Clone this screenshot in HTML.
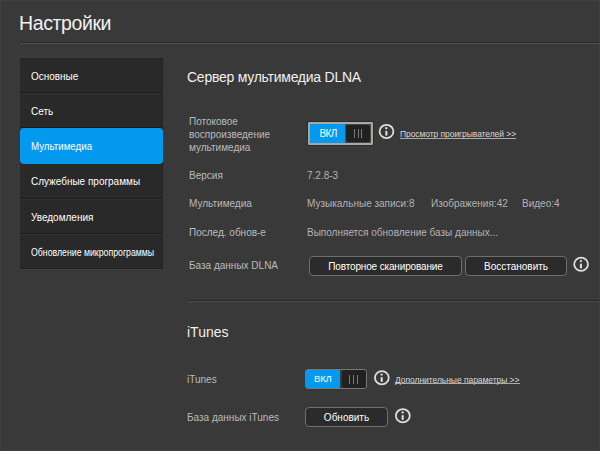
<!DOCTYPE html>
<html><head><meta charset="utf-8">
<style>
html,body{margin:0;padding:0;}
body{width:600px;height:451px;overflow:hidden;background:#393939;position:relative;font-family:"Liberation Sans",sans-serif;}
.a{position:absolute;white-space:nowrap;line-height:1;}
#edgeT{position:absolute;left:0;top:0;width:600px;height:1px;background:#424242;}
#edgeL{position:absolute;left:0;top:0;width:1px;height:451px;background:#404040;}
#edgeB{position:absolute;left:0;bottom:0;width:600px;height:1px;background:#404040;}
#edgeR{position:absolute;right:0;top:0;width:1px;height:451px;background:#404040;}
.title{left:19px;top:13.5px;font-size:19.5px;color:#f2f2f2;letter-spacing:-0.4px;}
.sep1{position:absolute;left:20px;top:42px;width:580px;height:1px;background:#2c2c2c;}
.sep1b{position:absolute;left:20px;top:43px;width:580px;height:1px;background:#4e4e4e;}
.menu{position:absolute;left:20px;top:58px;width:143px;height:211px;background:#292929;border-radius:2px;box-shadow:inset 0 1px 0 #262626, inset 0 -1px 0 #1f1f1f, inset -1px 0 0 #252525, 0 -1px 0 #3f3f3f, 0 1px 0 #3f3f3f;}
.mi{position:absolute;left:0;width:143px;height:35px;}
.mi .l{position:absolute;left:0;bottom:0;width:143px;height:1px;background:#1c1c1c;}
.mi .l::after{content:"";position:absolute;left:0;top:1px;width:143px;height:1px;background:#323232;}
.mt{position:absolute;left:11px;top:13px;font-size:10.5px;color:#fff;letter-spacing:0;transform:scaleX(0.95);transform-origin:0 0;}
.blue{background:#0399ef;border-radius:4px;}
.h{font-size:14px;color:#f0f0f0;letter-spacing:-0.25px;}
.lb{font-size:10px;color:#bbbbbb;}
.vl{font-size:10px;color:#b3b3b3;}
.btn{position:absolute;box-sizing:border-box;height:20px;border:1.5px solid #6f6f6f;border-radius:4px;background:#2b2b2b;}
.btn span{position:absolute;left:0;right:0;top:5px;text-align:center;color:#fff;font-size:10px;line-height:1;white-space:nowrap;}
.info{position:absolute;width:20px;height:20px;}
.lnk{font-size:8.5px;color:#d8d8d8;}
.ul{position:absolute;height:1px;background:#ababab;}
.sep2{position:absolute;left:187px;top:300px;width:413px;height:1px;background:#2a2a2a;}
.sep2b{position:absolute;left:187px;top:301px;width:413px;height:1px;background:#474747;box-shadow:0 1px 0 #3f3f3f;}
.kl{position:absolute;width:1.2px;background:#7a7a7a;}
</style></head><body>
<svg width="0" height="0" style="position:absolute"><defs>
<g id="ic"><ellipse cx="10" cy="10" rx="6.9" ry="6.65" fill="none" stroke="#dedede" stroke-width="1.8"/><circle cx="9.8" cy="6.8" r="1.15" fill="#dedede"/><rect x="8.8" y="9.2" width="2.1" height="5.0" rx="1" fill="#dedede"/></g>
</defs></svg>
<div id="edgeT"></div><div id="edgeL"></div><div id="edgeR"></div><div id="edgeB"></div>
<div class="a title">Настройки</div>
<div class="sep1"></div><div class="sep1b"></div>

<div class="menu">
  <div class="mi" style="top:0"><div class="l"></div><div class="a mt">Основные</div></div>
  <div class="mi" style="top:35px"><div class="l"></div><div class="a mt">Сеть</div></div>
  <div class="mi blue" style="top:70px;left:-0.5px;width:143.5px;height:35.6px"><div class="a mt" style="transform:scaleX(0.925)">Мультимедиа</div></div>
  <div class="mi" style="top:105px;height:36px"><div class="l"></div><div class="a mt">Служебные программы</div></div>
  <div class="mi" style="top:141px;height:35px"><div class="l"></div><div class="a mt">Уведомления</div></div>
  <div class="mi" style="top:176px;height:34px"><div class="a mt" style="top:14px;font-size:10px;transform:scaleX(0.875)">Обновление микропрограммы</div></div>
</div>

<div class="a h" style="left:187px;top:70px">Сервер мультимедиа DLNA</div>

<div class="a lb" style="left:189px;top:115px;line-height:13px;white-space:normal;width:100px">Потоковое<br>воспроизведение<br>мультимедиа</div>

<!-- toggle 1 -->
<div style="position:absolute;left:308px;top:122px;width:65px;height:23px;box-sizing:border-box;border:2px solid #aaa7a3;border-radius:1px;background:#4a443f;box-shadow:0 0 0 1px #2c2c2c;">
  <div style="position:absolute;left:0;top:0;width:35px;height:19px;background:#0399ef;"></div>
  <div class="a" style="left:9.5px;top:5px;font-size:10px;letter-spacing:-0.6px;color:#fff">ВКЛ</div>
  <div style="position:absolute;left:36px;top:1px;width:24px;height:17px;background:#202020;border-radius:2px;"></div>
  <div class="kl" style="left:43.8px;top:5.3px;height:8.7px"></div>
  <div class="kl" style="left:47.5px;top:5.3px;height:8.7px"></div>
  <div class="kl" style="left:51.2px;top:5.3px;height:8.7px"></div>
</div>
<svg class="info" style="left:376px;top:121px" viewBox="0 0 20 20"><use href="#ic" transform="translate(0.5,0.45)"/></svg>
<div class="a lnk" style="left:400px;top:130px;letter-spacing:-0.07px">Просмотр проигрывателей &gt;&gt;</div>
<div class="ul" style="left:400px;top:138px;width:116px"></div>

<div class="a lb" style="left:189px;top:171px">Версия</div>
<div class="a vl" style="left:307px;top:171px">7.2.8-3</div>
<div class="a lb" style="left:189px;top:199px">Мультимедиа</div>
<div class="a vl" style="left:307px;top:199px">Музыкальные записи:8</div>
<div class="a vl" style="left:431px;top:199px">Изображения:42</div>
<div class="a vl" style="left:522px;top:199px">Видео:4</div>
<div class="a lb" style="left:189px;top:228px">Послед. обнов-е</div>
<div class="a vl" style="left:307px;top:228px">Выполняется обновление базы данных...</div>
<div class="a lb" style="left:189px;top:261px">База данных DLNA</div>
<div class="btn" style="left:309px;top:256px;width:153px"><span style="letter-spacing:-0.15px">Повторное сканирование</span></div>
<div class="btn" style="left:465px;top:256px;width:102px"><span>Восстановить</span></div>
<svg class="info" style="left:571px;top:254px" viewBox="0 0 20 20"><use href="#ic" transform="translate(0.1,0.25)"/></svg>

<div class="sep2"></div><div class="sep2b"></div>

<div class="a h" style="left:187px;top:325px;letter-spacing:0">iTunes</div>
<div class="a lb" style="left:187px;top:375px">iTunes</div>
<!-- toggle 2 -->
<div style="position:absolute;left:305px;top:369px;width:62px;height:20px;box-sizing:border-box;border:1px solid #777;border-radius:3px;background:#3a3a3a;">
  <div style="position:absolute;left:0;top:0;width:34px;height:18px;background:#0399ef;border-radius:1px 0 0 1px;"></div>
  <div class="a" style="left:8px;top:3.5px;font-size:9.5px;letter-spacing:-0.2px;color:#fff">ВКЛ</div>
  <div style="position:absolute;left:35.5px;top:0;width:24.5px;height:18px;background:#212121;border-radius:2.5px;"></div>
  <div class="kl" style="left:43.2px;top:4.6px;height:9px"></div>
  <div class="kl" style="left:46.8px;top:4.6px;height:9px"></div>
  <div class="kl" style="left:50.5px;top:4.6px;height:9px"></div>
</div>
<svg class="info" style="left:371px;top:367px" viewBox="0 0 20 20"><use href="#ic" transform="translate(0.85,0.75)"/></svg>
<div class="a lnk" style="left:395px;top:376px;letter-spacing:-0.05px">Дополнительные параметры &gt;&gt;</div>
<div class="ul" style="left:395px;top:383px;width:125px"></div>

<div class="a lb" style="left:187px;top:413px">База данных iTunes</div>
<div class="btn" style="left:305px;top:407px;width:83px"><span>Обновить</span></div>
<svg class="info" style="left:392px;top:405px" viewBox="0 0 20 20"><use href="#ic" transform="translate(0.85,0.7)"/></svg>
</body></html>
